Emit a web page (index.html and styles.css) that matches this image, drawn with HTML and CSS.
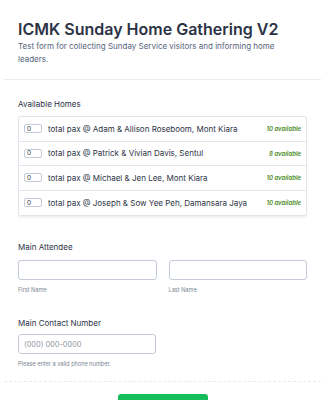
FILE: index.html
```html
<!DOCTYPE html>
<html lang="en">
<head>
  <meta charset="UTF-8" />
  <meta name="viewport" content="width=device-width, initial-scale=1.0"/>
  <title>ICMK Sunday Home Gathering V2</title>
  <link rel="stylesheet" href="styles.css">
</head>
<body>
<div class="form">
  <div class="header">
    <h1>ICMK Sunday Home Gathering V2</h1>
    <p>Test form for collecting Sunday Service visitors and informing home leaders.</p>
  </div>

  <div class="field homes-field">
    <label class="field-label">Available Homes</label>
    <div class="homes">
      <div class="home-row">
        <input class="pax" type="text" value="0" />
        <span class="home-name">total pax @ Adam &amp; Allison Roseboom, Mont Kiara</span>
        <span class="avail">10 available</span>
      </div>
      <div class="home-row">
        <input class="pax" type="text" value="0" />
        <span class="home-name">total pax @ Patrick &amp; Vivian Davis, Sentul</span>
        <span class="avail">8 available</span>
      </div>
      <div class="home-row">
        <input class="pax" type="text" value="0" />
        <span class="home-name">total pax @ Michael &amp; Jen Lee, Mont Kiara</span>
        <span class="avail">10 available</span>
      </div>
      <div class="home-row">
        <input class="pax" type="text" value="0" />
        <span class="home-name">total pax @ Joseph &amp; Sow Yee Peh, Damansara Jaya</span>
        <span class="avail">10 available</span>
      </div>
    </div>
  </div>

  <div class="field attendee">
    <label class="field-label">Main Attendee</label>
    <div class="name-row">
      <div class="name-col">
        <input class="text-input" type="text" />
        <span class="sublabel">First Name</span>
      </div>
      <div class="name-col">
        <input class="text-input" type="text" />
        <span class="sublabel">Last Name</span>
      </div>
    </div>
  </div>

  <div class="field contact">
    <label class="field-label">Main Contact Number</label>
    <input class="text-input phone" type="text" placeholder="(000) 000-0000" />
    <span class="sublabel">Please enter a valid phone number.</span>
  </div>

  <div class="footer">
    <button class="submit">Submit</button>
  </div>
</div>
</body>
</html>
```

FILE: styles.css
```css
* {
  box-sizing: border-box;
}

body {
  margin: 0;
  font-family: 'Inter', sans-serif;
  background: #fff;
  color: #2c3345;
  overflow: hidden;
}

.form {
  padding: 0 4px;
}

.header {
  padding: 19px 14px 13px 14px;
  border-bottom: 1px solid #eaebf2;
}
.header h1 {
  margin: 0;
  font-size: 16px;
  font-weight: 600;
  line-height: 20px;
}
.header p {
  margin: 1px 0 0 0;
  max-width: 275px;
  font-size: 8px;
  line-height: 13px;
  color: #57647e;
}

.field {
  padding: 0 14px;
}
.field-label {
  display: block;
  font-size: 8px;
  line-height: 12px;
  color: #2c3345;
  margin-bottom: 7px;
}

.homes-field {
  padding-top: 18px;
}
.homes-field .field-label {
  margin-bottom: 6px;
}

.homes {
  border: 1px solid #e3e5ec;
  border-radius: 2px;
  box-shadow: 0 2px 2px rgba(0, 0, 0, 0.06);
}
.home-row {
  display: flex;
  align-items: center;
  height: 24.5px;
  padding: 0 5px;
  border-bottom: 1px solid #e3e5ec;
}
.home-row:last-child {
  border-bottom: none;
}
.pax {
  width: 18px;
  height: 9px;
  border: 1px solid #c3cad8;
  border-radius: 2px;
  font-family: 'Inter', sans-serif;
  font-size: 6.5px;
  line-height: 7px;
  padding: 0 0 0 2px;
  color: #2c3345;
  margin-right: 6px;
}
.home-name {
  flex: 1;
  font-size: 8px;
  color: #2c3345;
  white-space: nowrap;
}
.avail {
  font-size: 6px;
  font-style: italic;
  font-weight: 600;
  color: #4b8a1f;
}

.attendee {
  margin-top: 25px;
}
.name-row {
  display: flex;
  gap: 12px;
}
.name-col {
  flex: 1;
  display: flex;
  flex-direction: column;
}
.text-input {
  display: block;
  height: 20px;
  border: 1px solid #c3cad8;
  border-radius: 3px;
  font-family: 'Inter', sans-serif;
  font-size: 7.4px;
  padding: 0 5px;
  width: 100%;
}
.text-input::placeholder {
  color: #8f96a3;
}
.sublabel {
  display: block;
  font-size: 5.6px;
  line-height: 8px;
  color: #7d8595;
  margin-top: 6px;
}

.contact {
  margin-top: 23px;
  padding-bottom: 13px;
  border-bottom: 1px dashed #eaebf2;
}
.contact .field-label {
  margin-bottom: 5px;
}
.phone {
  width: 138px;
}

.footer {
  display: flex;
  justify-content: center;
  padding-top: 12px;
}
.submit {
  width: 90px;
  height: 30px;
  border: none;
  border-radius: 3px;
  background: #18bd5b;
  color: #fff;
  font-family: 'Inter', sans-serif;
  font-size: 9px;
}
```
